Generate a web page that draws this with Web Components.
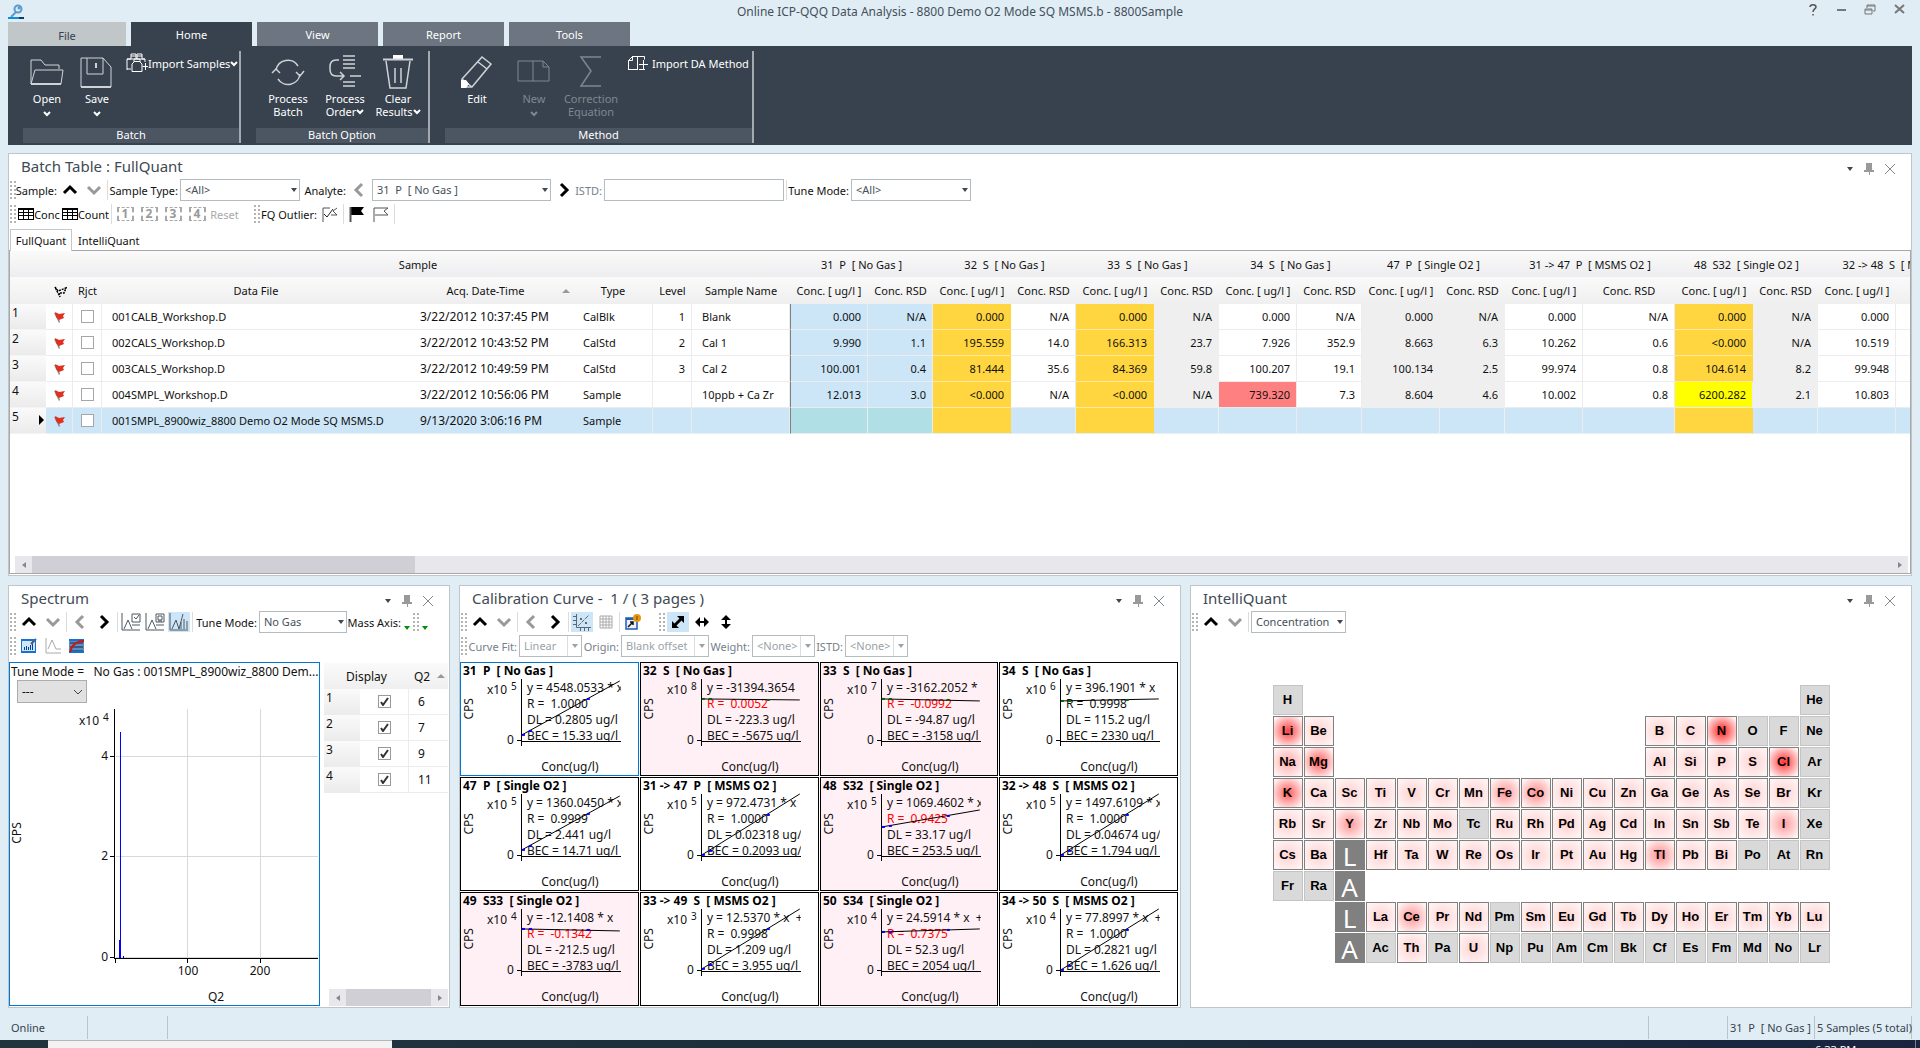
<!DOCTYPE html>
<html lang="en">
<head>
<meta charset="utf-8">
<title>Online ICP-QQQ Data Analysis</title>
<style>
  html, body { height: 100%; }
  body {
    margin: 0;
    background: #e0edf5;
    color: #111;
    font-family: "Noto Sans", "Open Sans", sans-serif;
    font-size: 11px;
    line-height: 13px;
  }
</style>
</head>
<body>
<ms-workbench></ms-workbench>

<script>
// ---------- icons ----------
const ICONS = {
  up: [16, 12, '<path d="M2 9 8 3l6 6" fill="none" stroke="#000" stroke-width="3"/>'],
  down: [16, 12, '<path d="M2 3 8 9l6-6" fill="none" stroke="#999" stroke-width="3"/>'],
  prev: [12, 16, '<path d="M9 2 3 8l6 6" fill="none" stroke="#999" stroke-width="3"/>'],
  next: [12, 16, '<path d="M3 2 9 8l-6 6" fill="none" stroke="#000" stroke-width="3"/>'],
  caret: [8, 6, '<path d="M1 1h6L4 5z" fill="#3c4750"/>'],
  chev: [8, 6, '<path d="M1 1l3 3 3-3" fill="none" stroke="currentColor" stroke-width="2"/>'],
  pin: [10, 12, '<path d="M2 0h6v7h2v2H6v3H5V9H0V7h2z" fill="#999"/>'],
  close: [12, 12, '<path d="M1 1l10 10M11 1L1 11" stroke="#808890" fill="none"/>'],
  key: [16, 16, '<circle cx="10" cy="5" r="3.5" fill="none" stroke="#5b9bd0" stroke-width="2"/><circle cx="11" cy="4" r="1.5" fill="#5b9bd0"/><path d="M8 8l-5 5" stroke="#5b9bd0" stroke-width="2"/><path d="M0 14h11" stroke="#0a8fe0" stroke-width="2"/><path d="M11 14h5" stroke="#0b3c66" stroke-width="2"/>'],
  help: [10, 12, '<path d="M2 3c0-3 6-3 6 0 0 2-3 2-3 5M5 10v1.500" fill="none" stroke="#555" stroke-width="1.500"/>'],
  min: [10, 12, '<path d="M1 6h9" stroke="#777" stroke-width="2"/>'],
  restore: [12, 12, '<path d="M3 4V1h8v6H9M1 5h7v5H1zM3 2h8M1 6h7" fill="none" stroke="#777" stroke-width="1"/>'],
  quit: [12, 12, '<path d="M1 1l9 8M10 1L1 9" stroke="#777" stroke-width="2"/>'],
  open: [34, 32, '<path d="M1 28V4h10l4 5h14v4M1 28 5 14h28l-2 14z" fill="none" stroke="#cfd3d7"/><path d="M1 28h30" stroke="#cfd3d7" stroke-width="2"/>'],
  save: [34, 32, '<path d="M1 2h22l8 9v20H1zM7 2v16h16V2" fill="none" stroke="#cfd3d7"/><path d="M1 31h30M16 7v5" stroke="#cfd3d7" stroke-width="2"/>'],
  samples: [22, 20, '<path d="M1 17V6h4V1h5v5M11 6V1h5v5h3v3M1 6h18M5 3h5M11 3h5M1 16h4" fill="none" stroke="#fff"/><path d="M6 18.500V11l2-2V6h6v3l2 2v7.500zM8 8.500h6M16.500 13.500H22M19.500 10v7" fill="none" stroke="#fff"/>'],
  process: [34, 32, '<path d="M5 14a12 12 0 0 1 22-4M29 18a12 12 0 0 1-22 5" fill="none" stroke="#cfd3d7" stroke-width="1.500"/><path d="M1 17l4-4 4 4M33 15l-4 5-4-4" fill="none" stroke="#cfd3d7" stroke-width="1.500"/>'],
  order: [34, 34, '<path d="M15 1h12M15 5h12M15 9h12M15 13h12M22 21h11M15 27h12M15 31h12" stroke="#cfd3d7" stroke-width="1.500"/><path d="M11 5H8q-6 0-6 7v2q0 7 6 7h8M12 17l4 4-4 4" fill="none" stroke="#cfd3d7" stroke-width="1.500"/>'],
  trash: [32, 34, '<path d="M11 0h10v4H11z" fill="#fff"/><path d="M1 4.500h30" stroke="#cfd3d7" stroke-width="2"/><path d="M4 6l4 27h16l4-27M13 13v15M19 13v15" fill="none" stroke="#cfd3d7" stroke-width="1.500"/>'],
  edit: [34, 34, '<path d="M2 24 22 2l9 7L12 32H2zM18 7l9 7M2 24l10 8" fill="none" stroke="#cfd3d7" stroke-width="1.500"/><path d="M1 25h5l3 4-3 4H1z" fill="#fff"/>'],
  fresh: [34, 32, '<path d="M1 5h25l6 6v14H1zM16 5v20M26 5v6h6" fill="none" stroke="#7e8791"/>'],
  sigma: [24, 32, '<path d="M22 1H2l10 14L2 30h20" fill="none" stroke="#7e8791" stroke-width="1.500"/>'],
  method: [26, 16, '<path d="M2.500 14.500V5.500l4-4h12v3M6.500 1v4.500h-4M2 14.500h10M11.500 1v13M13 14.500h6M17.500 5v9M13 9.500h9" fill="none" stroke="#fff"/>'],
  grid: [16, 12, '<path d="M0 0h16v12H0z" fill="#000"/><path d="M1 2h4v2H1zM6 2h4v2H6zM11 2h4v2h-4zM1 5h4v2H1zM6 5h4v2H6zM11 5h4v2h-4zM1 8h4v3H1zM6 8h4v3H6zM11 8h4v3h-4z" fill="#fff"/>'],
  flagCheck: [16, 16, '<path d="M1 16V2h7M15 2l-4 3 4 4H9" fill="none" stroke="#555"/><path d="M2 8l3 3 6-8" fill="none" stroke="#222"/>'],
  flagFull: [16, 16, '<path d="M1 1h14l-3 4 3 4H1z" fill="#000"/><path d="M1.500 1v15" stroke="#555" stroke-width="2"/>'],
  flagOpen: [16, 16, '<path d="M1 16V2h14l-4 3 4 4H2" fill="none" stroke="#555"/>'],
  flagHead: [14, 12, '<path d="M2 1l3 4 8-3-2 5H6L7 11z" fill="none" stroke="#000" stroke-width="1.500" stroke-dasharray="2 1"/>'],
  flagRed: [12, 12, '<path d="M1 2l5 10 1-1-3-9z" fill="#888"/><path d="M2 1l4 2 6-1-2 3 1 2-5 2-3-3z" fill="#e0301f"/>'],
  row: [6, 10, '<path d="M1 0l5 5-5 5z" fill="#000"/>'],
  asc: [8, 6, '<path d="M0 5h8L4 1z" fill="#999"/>'],
  left: [6, 8, '<path d="M5 1v6L1 4z" fill="#858595"/>'],
  right: [6, 8, '<path d="M1 1v6l4-3z" fill="#858595"/>'],
  tick: [9, 9, '<path d="M1 5l2 3 5-7" fill="none" stroke="#333" stroke-width="2"/>'],
  peakCheck: [20, 18, '<path d="M1 0v17h18M3 16l4-9 4 9M11 12h8M11 1h8v8h-8zM13 4l2 2 3-4" fill="none" stroke="#4c5660"/>'],
  peakLock: [20, 18, '<path d="M1 0v17h18M3 16l4-9 4 9M11 12h8M11 1h8v8h-8zM13 3h4v4h-4zM14 7v2M16 7v2" fill="none" stroke="#4c5660"/>'],
  peakBars: [20, 18, '<path d="M1 0v17h18M3 16l4-9 3 9 4-15M12 16V9M15 16V6M18 16V8" fill="none" stroke="#4c5660"/>'],
  barsBlue: [16, 16, '<rect x=".5" y="2" width="14" height="12" rx="1" fill="#cfe6f9" stroke="#1d6fc4"/><path d="M3.500 12V9M5.500 12V8M7.500 12V9M9.500 12V7M11.500 12V6" stroke="#003f9e"/><path d="M10 6l5-5" stroke="#555" stroke-width="2"/><path d="M0 14h15M0 2h15" stroke="#1672d2" stroke-width="2"/>'],
  peakGrey: [16, 16, '<path d="M1 0v15h15M3 11l4-9 4 9h5" fill="none" stroke="#aaa"/>'],
  curveRed: [16, 16, '<rect y="1" width="15" height="14" rx="1" fill="#5b8fc4"/><path d="M1 5h13M1 9h13M1 13h13" stroke="#1b2b40" stroke-width="1"/><path d="M0 2h15M0 14h15" stroke="#1672d2" stroke-width="2"/><path d="M1 14Q4 3 15 3" fill="none" stroke="#d01515" stroke-width="2"/>'],
  calib: [18, 18, '<path d="M3.500 1v13.500H18M0 3.500h3M0 7.500h3M0 11.500h3M7.500 15v3M11.500 15v3M15.500 15v3" fill="none" stroke="#5d6770"/><path d="M5 13 16 2" stroke="#5d6770" stroke-dasharray="4 1"/><path d="M7 5h2v2H7zM12 9h2v2h-2z" fill="#5d6770"/>'],
  table: [14, 14, '<path d="M1 1h12v12H1zM4 1v12M7 1v12M10 1v12M1 4h12M1 7h12M1 10h12" fill="none" stroke="#aaa"/>'],
  export: [16, 16, '<path d="M1 4h11v11H1z" fill="#eef" stroke="#1d5fae" stroke-width="1.500"/><path d="M1 4h11v2H1z" fill="#1d5fae"/><path d="M3 13l5-5M5 8h3v3" stroke="#111" stroke-width="1.500" fill="none"/><circle cx="12" cy="4" r="4" fill="#e8960f"/><path d="M12 2v4" stroke="#734600"/>'],
  diag: [14, 14, '<path d="M3 11 11 3" stroke="#000" stroke-width="3"/><path d="M6 1h7v7zM1 6v7h7z" fill="#000"/>'],
  horiz: [14, 14, '<path d="M3 7h8" stroke="#000" stroke-width="2"/><path d="M5 2v10L0 7zM9 2v10l5-5z" fill="#000"/>'],
  vert: [14, 14, '<path d="M7 3v8" stroke="#000" stroke-width="2"/><path d="M2 5h10L7 0zM2 9h10l-5 5z" fill="#000"/>'],
  green: [8, 6, '<path d="M1 1h6L4 5z" fill="#0a8a0a"/>']
};

function icon(name) {
  const [w, h, body] = ICONS[name];
  return `<svg width="${w}" height="${h}" viewBox="0 0 ${w} ${h}" aria-hidden="true">${body}</svg>`;
}

const RESET = `
  *, *::before, *::after { box-sizing: border-box; }
  svg { display: block; flex: none; }
  button { font: inherit; color: inherit; background: none; border: 0; padding: 0; margin: 0; }
`;

// ---------- title bar ----------
class TitleBar extends HTMLElement {
  constructor() {
    super();
    this.attachShadow({ mode: 'open' });
    this.shadowRoot.innerHTML = `
      <style>${RESET}
        :host { display: grid; grid-template-columns: 1fr auto 1fr; height: 22px; padding: 4px 8px 0; color: #44505a; }
        h1 { margin: 0; font-size: 12px; line-height: 16px; font-weight: normal; }
        .buttons { display: flex; justify-content: flex-end; align-items: flex-start; gap: 18px; padding-right: 6px; }
      </style>
      ${icon('key')}
      <h1><slot></slot></h1>
      <div class="buttons">
        <button aria-label="Help">${icon('help')}</button>
        <button aria-label="Minimize">${icon('min')}</button>
        <button aria-label="Restore">${icon('restore')}</button>
        <button aria-label="Close">${icon('quit')}</button>
      </div>
    `;
  }
}
customElements.define('title-bar', TitleBar);

// ---------- ribbon ----------
class RibbonTabs extends HTMLElement {
  constructor() {
    super();
    this.attachShadow({ mode: 'open' });
    const tabs = ['File', 'Home', 'View', 'Report', 'Tools'];
    this.shadowRoot.innerHTML = `
      <style>${RESET}
        :host { display: flex; gap: 5px; height: 24px; padding: 0 8px; }
        button { width: 121px; background: #6d7580; color: #fff; }
        .file { width: 118px; background: #c1c6c8; color: #38424e; padding-top: 3px; }
        .home { background: #38424e; }
      </style>
      ${tabs.map(t => `<button class="${t.toLowerCase()}">${t}</button>`).join('')}
    `;
  }
}
customElements.define('ribbon-tabs', RibbonTabs);

class RibbonGroup extends HTMLElement {
  constructor() {
    super();
    this.attachShadow({ mode: 'open' });
    this.shadowRoot.innerHTML = `
      <style>${RESET}
        :host { display: flex; flex-direction: column; border-right: 2px solid #a3a9af; }
        .items { display: flex; flex: 1; align-items: flex-start; }
        .name { height: 15px; background: #4c5562; text-align: center; line-height: 14px; }
      </style>
      <div class="items"><slot></slot></div>
      <div class="name">${this.getAttribute('name')}</div>
    `;
  }
}
customElements.define('ribbon-group', RibbonGroup);

class RibbonButton extends HTMLElement {
  constructor() {
    super();
    this.attachShadow({ mode: 'open' });
    const menu = this.getAttribute('menu');
    const label = this.getAttribute('label').split('|').join('<br>') + (menu === 'inline' ? icon('chev') : '');
    const pic = icon(this.getAttribute('icon'));
    this.shadowRoot.innerHTML = `
      <style>${RESET}
        :host { display: block; flex: none; color: #fff; }
        :host([disabled]) { color: #7e8791; }
        button { display: flex; flex-direction: column; align-items: center; width: 100%; padding-top: 3px; white-space: nowrap; }
        .pic { display: flex; align-items: center; height: 36px; margin-bottom: 2px; }
        .text svg { display: inline-block; vertical-align: 1px; }
        .below { margin-top: 6px; }
        .small { flex-direction: row; height: 24px; padding: 0 0 0 3px; }
      </style>
      ${this.hasAttribute('small')
        ? `<button class="small">${pic}<span class="text">${label}</span></button>`
        : `<button><span class="pic">${pic}</span><span class="text">${label}</span>
           ${menu === 'below' ? `<span class="below">${icon('chev')}</span>` : ''}</button>`}
    `;
  }
}
customElements.define('ribbon-button', RibbonButton);

class AppRibbon extends HTMLElement {
  constructor() {
    super();
    this.attachShadow({ mode: 'open' });
    this.shadowRoot.innerHTML = `
      <style>${RESET}
        :host { display: flex; gap: 15px; height: 99px; margin: 0 8px; padding: 5px 15px 2px; background: #38424e; color: #fff; }
        .w48 { width: 48px; } .w50 { width: 50px; } .w52 { width: 52px; } .w56 { width: 56px; } .w64 { width: 64px; }
        .batch { width: 218px; } .option { width: 174px; } .method { width: 309px; }
      </style>
      <ribbon-group class="batch" name="Batch">
        <ribbon-button class="w48" icon="open" label="Open" menu="below"></ribbon-button>
        <ribbon-button class="w52" icon="save" label="Save" menu="below"></ribbon-button>
        <ribbon-button small icon="samples" label="Import Samples" menu="inline"></ribbon-button>
      </ribbon-group>
      <ribbon-group class="option" name="Batch Option">
        <ribbon-button class="w64" icon="process" label="Process|Batch"></ribbon-button>
        <ribbon-button class="w50" icon="order" label="Process|Order" menu="inline"></ribbon-button>
        <ribbon-button class="w56" icon="trash" label="Clear|Results" menu="inline"></ribbon-button>
      </ribbon-group>
      <ribbon-group class="method" name="Method">
        <ribbon-button class="w64" icon="edit" label="Edit"></ribbon-button>
        <ribbon-button class="w50" disabled icon="fresh" label="New" menu="below"></ribbon-button>
        <ribbon-button class="w64" disabled icon="sigma" label="Correction|Equation"></ribbon-button>
        <ribbon-button small icon="method" label="Import DA Method"></ribbon-button>
      </ribbon-group>
    `;
  }
}
customElements.define('app-ribbon', AppRibbon);

// ---------- panels and toolbars ----------
class DockPanel extends HTMLElement {
  constructor() {
    super();
    this.attachShadow({ mode: 'open' });
    this.shadowRoot.innerHTML = `
      <style>${RESET}
        :host { display: flex; flex-direction: column; min-width: 0; min-height: 0; background: #fff; border: 1px solid #bfc6ca; overflow: hidden; }
        header { display: flex; justify-content: space-between; height: 24px; padding: 0 15px 0 12px; }
        h2 { margin: 0; font-size: 15px; line-height: 24px; font-weight: normal; color: #404a54; white-space: pre; }
        .tools { display: flex; align-items: center; gap: 10px; padding-top: 6px; }
        .body { display: flex; flex-direction: column; flex: 1; min-height: 0; }
      </style>
      <header>
        <h2>${this.getAttribute('name')}</h2>
        <div class="tools">
          <button aria-label="Menu">${icon('caret')}</button>
          <button aria-label="Pin">${icon('pin')}</button>
          <button aria-label="Close">${icon('close')}</button>
        </div>
      </header>
      <slot name="bar"></slot>
      <div class="body"><slot></slot></div>
    `;
  }
}
customElements.define('dock-panel', DockPanel);

class ToolBar extends HTMLElement {
  constructor() {
    super();
    this.attachShadow({ mode: 'open' });
    this.shadowRoot.innerHTML = `
      <style>
        :host { display: flex; align-items: center; gap: 2px; height: 24px; padding-left: 1px; white-space: nowrap; flex: none; }
      </style>
      <slot></slot>
    `;
  }
}
customElements.define('tool-bar', ToolBar);

class ToolGrip extends HTMLElement {
  constructor() {
    super();
    this.attachShadow({ mode: 'open' });
    this.shadowRoot.innerHTML = `
      <style>
        :host { display: block; flex: none; width: 6px; height: 18px;
          background: conic-gradient(#b4b4b4 25%, transparent 0) -2px 0 / 4px 4px; }
        :host([spaced]) { margin-left: 13px; }
      </style>
    `;
  }
}
customElements.define('tool-grip', ToolGrip);

class ToolSep extends HTMLElement {
  constructor() {
    super();
    this.attachShadow({ mode: 'open' });
    this.shadowRoot.innerHTML = `<style>:host { display: block; width: 1px; height: 20px; background: #dcdcdc; }</style>`;
  }
}
customElements.define('tool-sep', ToolSep);

class ToolButton extends HTMLElement {
  constructor() {
    super();
    this.attachShadow({ mode: 'open' });
    const name = this.getAttribute('icon');
    this.shadowRoot.innerHTML = `
      <style>${RESET}
        :host { display: block; flex: none; min-width: 22px; }
        :host([on]) { background: #cde6f7; }
        :host([narrow]) { min-width: 8px; padding-top: 12px; }
        :host([disabled]) { color: #a9a9a9; }
        button { display: flex; align-items: center; justify-content: center; width: 100%; height: 20px; }
        :host([narrow]) button { height: 6px; }
        .num { width: 17px; height: 14px; border: dashed #a8a8a8; border-width: 1px 2px; font-size: 12px; line-height: 12px; font-weight: bold; color: #999; text-align: center; }
      </style>
      <button aria-label="${this.getAttribute('hint') || name || ''}">
        ${name ? icon(name) : ''}
        ${this.hasAttribute('num') ? `<span class="num">${this.getAttribute('num')}</span>` : ''}
        <slot></slot>
      </button>
    `;
  }
}
customElements.define('tool-button', ToolButton);

class ComboBox extends HTMLElement {
  constructor() {
    super();
    this.attachShadow({ mode: 'open' });
    const label = this.getAttribute('label') || '';
    const value = this.getAttribute('value') || '';
    const off = this.hasAttribute('disabled');
    const field = this.hasAttribute('text')
      ? `<input id="field" type="text" aria-label="${label}">`
      : `<select id="field" ${off ? 'disabled' : ''} aria-label="${label || value}"><option>${value}</option></select><span class="arrow">${icon('caret')}</span>`;
    this.shadowRoot.innerHTML = `
      <style>${RESET}
        :host { display: flex; align-items: center; gap: 2px; flex: none; }
        :host([muted]) label, :host([disabled]) label { color: #77808a; }
        label { width: var(--label); white-space: nowrap; display: flex; justify-content: flex-end; }
        .box { position: relative; width: var(--field); height: 22px; }
        select, input { appearance: none; width: 100%; height: 22px; margin: 0; padding: 0 0 2px 4px; border: 1px solid #b4bcc0; border-radius: 0; background: #fff; font: inherit; color: #46505a; opacity: 1; }
        .arrow { position: absolute; right: 2px; top: 8px; pointer-events: none; }
        :host([disabled]) select { color: #9aa2a8; }
        :host([disabled]) .arrow { right: 0; top: 0; height: 22px; padding: 8px 3px; border-left: 1px solid #b4bcc0; opacity: .5; }
      </style>
      ${label ? `<label for="field">${label}</label>` : ''}
      <div class="box">${field}</div>
    `;
  }
}
customElements.define('combo-box', ComboBox);

class ScrollTrack extends HTMLElement {
  constructor() {
    super();
    this.attachShadow({ mode: 'open' });
    this.shadowRoot.innerHTML = `
      <style>${RESET}
        :host { display: flex; flex: none; height: 17px; background: #e8e8ec; }
        button { display: flex; align-items: center; justify-content: center; width: 17px; }
        .track { flex: 1; }
        .thumb { width: var(--thumb); height: 100%; background: #cfcfd5; }
      </style>
      <button aria-label="Scroll left">${icon('left')}</button>
      <div class="track"><div class="thumb"></div></div>
      <button aria-label="Scroll right">${icon('right')}</button>
    `;
  }
}
customElements.define('scroll-track', ScrollTrack);

// ---------- batch table ----------
const ANALYTES = [
  { name: '31  P  [ No Gas ]', rsd: 65, cls: 'blue', rsdCls: 'blue' },
  { name: '32  S  [ No Gas ]', rsd: 65, cls: 'gold', rsdCls: '' },
  { name: '33  S  [ No Gas ]', rsd: 65, cls: 'gold', rsdCls: 'grey' },
  { name: '34  S  [ No Gas ]', rsd: 65, cls: '', rsdCls: '' },
  { name: '47  P  [ Single O2 ]', rsd: 65, cls: 'grey', rsdCls: 'grey' },
  { name: '31 -> 47  P  [ MSMS O2 ]', rsd: 92, cls: '', rsdCls: '' },
  { name: '48  S32  [ Single O2 ]', rsd: 65, cls: 'gold', rsdCls: 'grey' },
  { name: '32 -> 48  S  [ MSMS O2 ]', rsd: 92, cls: '', rsdCls: '' }
];

const SAMPLES = [
  ['001CALB_Workshop.D', '3/22/2012 10:37:45 PM', 'CalBlk', '1', 'Blank',
    ['0.000', 'N/A', '0.000', 'N/A', '0.000', 'N/A', '0.000', 'N/A', '0.000', 'N/A', '0.000', 'N/A', '0.000', 'N/A', '0.000', '']],
  ['002CALS_Workshop.D', '3/22/2012 10:43:52 PM', 'CalStd', '2', 'Cal 1',
    ['9.990', '1.1', '195.559', '14.0', '166.313', '23.7', '7.926', '352.9', '8.663', '6.3', '10.262', '0.6', '&lt;0.000', 'N/A', '10.519', '']],
  ['003CALS_Workshop.D', '3/22/2012 10:49:59 PM', 'CalStd', '3', 'Cal 2',
    ['100.001', '0.4', '81.444', '35.6', '84.369', '59.8', '100.207', '19.1', '100.134', '2.5', '99.974', '0.8', '104.614', '8.2', '99.948', '']],
  ['004SMPL_Workshop.D', '3/22/2012 10:56:06 PM', 'Sample', '', '10ppb + Ca Zr',
    ['12.013', '3.0', '&lt;0.000', 'N/A', '&lt;0.000', 'N/A', '739.320', '7.3', '8.604', '4.6', '10.002', '0.8', '6200.282', '2.1', '10.803', '']],
  ['001SMPL_8900wiz_8800 Demo O2 Mode SQ MSMS.D', '9/13/2020 3:06:16 PM', 'Sample', '', '', Array(16).fill('')]
];

class BatchGrid extends HTMLElement {
  constructor() {
    super();
    this.attachShadow({ mode: 'open' });
    const cols = [36, 27, 29, 308, 163, 80, 39, 98];
    ANALYTES.forEach(a => cols.push(78, a.rsd));
    const total = cols.reduce((a, b) => a + b, 0);

    const rows = SAMPLES.map((s, r) => {
      const values = s[5].map((v, i) => {
        const a = ANALYTES[i >> 1];
        let cls = i % 2 ? a.rsdCls : a.cls;
        if (v === '739.320') cls = 'red';
        if (v === '6200.282') cls = 'yellow';
        return `<td class="num ${cls} ${i === 0 ? 'edge' : ''}">${v}</td>`;
      }).join('');
      const last = r === SAMPLES.length - 1;
      return `
        <tr class="${last ? 'current' : ''}">
          <th class="no"><span>${r + 1}${last ? icon('row') : ''}</span></th>
          <td class="mid">${icon('flagRed')}</td>
          <td class="mid"><input type="checkbox" aria-label="Reject ${s[0]}"></td>
          <td class="plain">${s[0]}</td><td class="plain date">${s[1]}</td><td>${s[2]}</td>
          <td class="num">${s[3]}</td><td>${s[4]}</td>${values}
        </tr>`;
    }).join('');

    this.shadowRoot.innerHTML = `
      <style>${RESET}
        :host { display: flex; flex-direction: column; flex: 1; min-height: 0; }
        .tabs { display: flex; height: 24px; padding: 3px 0 0 1px; position: relative; z-index: 1; }
        .tabs button { height: 22px; padding: 0 6px; }
        .tabs .on { width: 62px; border: 1px solid #c4c8cb; border-bottom: 0; background: #fff; padding: 0; }
        .frame { display: flex; flex-direction: column; flex: 1; min-height: 0; border: 1px solid #a8a8a8; margin-bottom: 1px; }
        .view { flex: 1; overflow: hidden; }
        table { width: ${total}px; table-layout: fixed; border-collapse: separate; border-spacing: 0; }
        th { font-weight: normal; height: 26px; padding: 0; white-space: pre; }
        thead tr:first-child th { background: linear-gradient(#fafafa, #ededf0); }
        thead tr:last-child th { height: 27px; background: linear-gradient(#fafafa, #efefef); }
        thead svg { display: inline-block; vertical-align: middle; }
        td { height: 26px; padding: 0 10px; border: solid #ececee; border-width: 0 1px 1px 0; white-space: nowrap; overflow: hidden; }
        .plain { border-right: 0; }
        .date { font-size: 12px; }
        .mid { padding: 0; }
        .mid svg { margin: 0 auto; }
        .num { text-align: right; padding: 0 6px; }
        .no { background: linear-gradient(#fafafa, #ebebeb); border-bottom: 1px solid #f4f4f4; text-align: left; vertical-align: top; font-size: 12px; }
        .no span { display: flex; justify-content: space-between; padding: 2px 2px 0; }
        .no svg { margin-top: 5px; }
        .sort { display: flex; justify-content: center; align-items: center; position: relative; padding-right: 12px; }
        .sort svg { position: absolute; right: 3px; top: 4px; }
        .blue { background: #cce6f7; }
        .gold { background: #ffd63f; border-color: #ffe9a0; border-right-color: #ffd63f; }
        .grey { background: #efefef; border-color: #efefef; }
        .red { background: #ff8080; }
        .yellow { background: #ff0; }
        .edge { border-left: 1px solid #808080; }
        .current td { background: #cce6f7; border-bottom-color: #e6f0f5; }
        .current td.blue { background: #b0e0e6; }
        .current td.gold { background: #ffd63f; }
        input { appearance: none; display: block; width: 13px; height: 13px; margin: 0 auto; border: 1px solid #a6a6a6; background: #fff; }
        scroll-track { --thumb: 383px; margin: 0 2px 0 5px; }
      </style>
      <div class="tabs"><button class="on">FullQuant</button><button>IntelliQuant</button></div>
      <div class="frame">
        <div class="view">
          <table>
            <colgroup>${cols.map(w => `<col style="width:${w}px">`).join('')}</colgroup>
            <thead>
              <tr><th></th><th colspan="7">Sample</th>${ANALYTES.map(a => `<th colspan="2">${a.name}</th>`).join('')}</tr>
              <tr>
                <th></th><th>${icon('flagHead')}</th><th>Rjct</th><th>Data File</th>
                <th><span class="sort">Acq. Date-Time${icon('asc')}</span></th>
                <th>Type</th><th>Level</th><th>Sample Name</th>
                ${ANALYTES.map((a, i) => `<th>Conc. [ ug/l ]</th><th>${i < 7 ? 'Conc. RSD' : ''}</th>`).join('')}
              </tr>
            </thead>
            <tbody>${rows}</tbody>
          </table>
        </div>
        <scroll-track></scroll-track>
      </div>
    `;
  }
}
customElements.define('batch-grid', BatchGrid);

// ---------- spectrum ----------
class SpectrumPlot extends HTMLElement {
  constructor() {
    super();
    this.attachShadow({ mode: 'open' });
    this.shadowRoot.innerHTML = `
      <style>${RESET}
        :host { display: flex; flex-direction: column; flex: 1; min-width: 0; border: 1px solid #0078d7; font-size: 12px; }
        .head { height: 17px; padding-left: 1px; line-height: 18px; white-space: pre; }
        .pick { position: relative; width: 70px; height: 23px; margin-left: 7px; }
        select { appearance: none; width: 100%; height: 100%; padding: 0 4px; border: 1px solid #adadad; border-radius: 0; background: #e1e1e1; font: inherit; color: #111; }
        .pick svg { position: absolute; right: 4px; top: 9px; }
        .plot { width: 100%; flex: 1; min-height: 0; }
        text { font-size: 12px; fill: #111; }
        .sup { font-size: 10px; }
        path { shape-rendering: crispEdges; }
      </style>
      <div class="head">Tune Mode =   No Gas : 001SMPL_8900wiz_8800 Dem...</div>
      <div class="pick"><select aria-label="Series"><option>---</option></select><svg width="10" height="6"><path d="M1 1l4 4 4-4" fill="none" stroke="#444"/></svg></div>
      <svg class="plot" viewBox="0 0 309 301" preserveAspectRatio="xMinYMin meet">
        <path d="M105.500 53.500H308M105.500 153.500H308M105.500 254.500H308M177.500 6V255M250.500 6V255" stroke="#d8d8d8"/>
        <path d="M104.500 6V255.500H308M100 53.500h5M100 153.500h5M100 254.500h5M105.500 255v5M177.500 255v5M250.500 255v5" fill="none" stroke="#000"/>
        <path d="M110.500 29V255M109.500 237V255M113.500 253v2" stroke="#00f"/>
        <text x="69" y="22">x10</text><text class="sup" x="93" y="18">4</text>
        <text x="98" y="57" text-anchor="end">4</text>
        <text x="98" y="157" text-anchor="end">2</text>
        <text x="98" y="258" text-anchor="end">0</text>
        <text x="178" y="272" text-anchor="middle">100</text>
        <text x="250" y="272" text-anchor="middle">200</text>
        <text x="206" y="298" text-anchor="middle">Q2</text>
        <text transform="translate(11 130) rotate(-90)" text-anchor="middle">CPS</text>
      </svg>
    `;
  }
}
customElements.define('spectrum-plot', SpectrumPlot);

class MassTable extends HTMLElement {
  constructor() {
    super();
    this.attachShadow({ mode: 'open' });
    const masses = [6, 7, 9, 11];
    this.shadowRoot.innerHTML = `
      <style>${RESET}
        :host { display: flex; flex-direction: column; justify-content: space-between; width: 125px; padding: 1px 1px 0 0; font-size: 12px; }
        table { width: 100%; table-layout: fixed; border-spacing: 0; }
        th, td { height: 26px; padding: 0; font-weight: normal; }
        thead th { background: linear-gradient(#fafafa, #efefef); }
        thead span { display: flex; align-items: center; justify-content: space-between; padding: 0 3px 0 5px; }
        tbody th { text-align: left; vertical-align: top; padding: 2px; background: linear-gradient(#fafafa, #ebebeb); }
        td { border: solid #ececee; border-width: 0 1px 1px 0; padding-left: 9px; }
        td:last-child { border-right: 0; }
        td.tick { padding: 0; }
        .check { display: grid; place-items: center; }
        .check > * { grid-area: 1 / 1; }
        .check svg { pointer-events: none; }
        input { appearance: none; width: 13px; height: 13px; margin: 0; border: 1px solid #999; background: #fff; }
        scroll-track { --thumb: 100%; margin-left: 5px; }
      </style>
      <table>
        <colgroup><col style="width:36px"><col style="width:49px"><col></colgroup>
        <thead><tr><th colspan="2">Display</th><th><span>Q2${icon('asc')}</span></th></tr></thead>
        <tbody>
          ${masses.map((m, i) => `<tr><th>${i + 1}</th><td class="tick"><label class="check"><input type="checkbox" aria-label="Display ${m}" checked>${icon('tick')}</label></td><td>${m}</td></tr>`).join('')}
        </tbody>
      </table>
      <scroll-track></scroll-track>
    `;
  }
}
customElements.define('mass-table', MassTable);

// ---------- calibration curves ----------
// line: y of the fit at the left and at the right edge of the plot
const CURVES = [
  { t: '31  P  [ No Gas ]', e: 5, y: '4548.0533 * x', r: ' 1.0000', dl: '0.2805', bec: '15.33', line: [73, 19], on: true },
  { t: '32  S  [ No Gas ]', e: 8, y: '-31394.3654', r: ' 0.0052', dl: '-223.3', bec: '-5675', line: [37, 38], bad: true, dot: '#060' },
  { t: '33  S  [ No Gas ]', e: 7, y: '-3162.2052 *', r: ' -0.0992', dl: '-94.87', bec: '-3158', line: [37, 39], bad: true, dot: '#060' },
  { t: '34  S  [ No Gas ]', e: 6, y: '396.1901 * x', r: ' 0.9998', dl: '115.2', bec: '2330', line: [39, 37], dot: '#060' },
  { t: '47  P  [ Single O2 ]', e: 5, y: '1360.0450 * x', r: ' 0.9999', dl: '2.441', bec: '14.71', line: [73, 19] },
  { t: '31 -> 47  P  [ MSMS O2 ]', e: 5, y: '972.4731 * x', r: ' 1.0000', dl: '0.02318', bec: '0.2093', line: [78, 17] },
  { t: '48  S32  [ Single O2 ]', e: 5, y: '1069.4602 * x', r: ' 0.9425', dl: '33.17', bec: '253.5', line: [50, 33], bad: true },
  { t: '32 -> 48  S  [ MSMS O2 ]', e: 5, y: '1497.6109 * x', r: ' 1.0000', dl: '0.04674', bec: '1.794', line: [78, 17] },
  { t: '49  S33  [ Single O2 ]', e: 4, y: '-12.1408 * x', r: ' -0.1342', dl: '-212.5', bec: '-3783', line: [37, 39], bad: true },
  { t: '33 -> 49  S  [ MSMS O2 ]', e: 3, y: '12.5370 * x  +', r: ' 0.9998', dl: '1.209', bec: '3.955', line: [77, 17] },
  { t: '50  S34  [ Single O2 ]', e: 4, y: '24.5914 * x  +', r: ' 0.7375', dl: '52.3', bec: '2054', line: [40, 37], bad: true },
  { t: '34 -> 50  S  [ MSMS O2 ]', e: 4, y: '77.8997 * x  +', r: ' 1.0000', dl: '0.2821', bec: '1.626', line: [78, 17] }
];

class CurveCard extends HTMLElement {
  constructor() {
    super();
    this.attachShadow({ mode: 'open' });
  }

  set curve(c) {
    const [a, b] = c.line;
    const at = x => Math.round(a + (b - a) * (x - 62) / 98);
    const dot = [62, 69, 127].map(x => `<rect x="${x}" y="${at(x) - 1}" width="3" height="2" fill="${c.dot || '#00f'}"/>`).join('');
    this.shadowRoot.innerHTML = `
      <style>
        :host { display: block; min-width: 0; min-height: 0; border: 1px solid ${c.on ? '#0078d7' : '#000'}; background: ${c.bad ? '#fff0f5' : '#fff'}; }
        .card { display: block; width: 100%; height: 100%; }
        text { font-size: 12px; fill: #111; white-space: pre; }
        .title { font-weight: bold; fill: #000; }
        .sup { font-size: 10px; }
        .bad { fill: #f00; }
        .axis { shape-rendering: crispEdges; }
      </style>
      <svg class="card" viewBox="1 1 177 112" preserveAspectRatio="xMinYMin meet">
        <text class="title" x="3" y="13">${c.t.replace('>', '&gt;')}</text>
        <text x="27" y="32">x10</text><text class="sup" x="51" y="28">${c.e}</text>
        <text x="54" y="82" text-anchor="end">0</text>
        <text transform="translate(13 47) rotate(-90)" text-anchor="middle">CPS</text>
        <svg x="64" y="16" width="97" height="64" viewBox="64 16 97 64">
          <text x="67" y="30">y = ${c.y}</text>
          <text x="67" y="46" class="${c.bad ? 'bad' : ''}">R = ${c.r}</text>
          <text x="67" y="62">DL = ${c.dl} ug/l</text>
          <text x="67" y="78">BEC = ${c.bec} ug/l</text>
        </svg>
        <path d="M62 ${a}L160 ${b}" stroke="#000"/>
        <path class="axis" d="M61.500 17V79.500H161M57 78.500h4M61.500 79v5" fill="none" stroke="#000"/>
        ${dot}
        <text x="110" y="109" text-anchor="middle">Conc(ug/l)</text>
      </svg>
    `;
  }
}
customElements.define('curve-card', CurveCard);

class CurveGrid extends HTMLElement {
  constructor() {
    super();
    this.attachShadow({ mode: 'open' });
    this.shadowRoot.innerHTML = `
      <style>
        :host { display: grid; grid-template: repeat(3, 1fr) / repeat(4, 1fr); gap: 1px; flex: 1; min-height: 0; margin-top: 4px; padding: 0 2px 1px 0; background: #fff; }
      </style>
    `;
    CURVES.forEach(c => {
      const card = document.createElement('curve-card');
      card.curve = c;
      this.shadowRoot.append(card);
    });
  }
}
customElements.define('curve-grid', CurveGrid);

// ---------- periodic table ----------
const PERIODS = [
  'H . . . . . . . . . . . . . . . . He',
  'Li Be . . . . . . . . . . B C N O F Ne',
  'Na Mg . . . . . . . . . . Al Si P S Cl Ar',
  'K Ca Sc Ti V Cr Mn Fe Co Ni Cu Zn Ga Ge As Se Br Kr',
  'Rb Sr Y Zr Nb Mo Tc Ru Rh Pd Ag Cd In Sn Sb Te I Xe',
  'Cs Ba *L Hf Ta W Re Os Ir Pt Au Hg Tl Pb Bi Po At Rn',
  'Fr Ra *A . . . . . . . . . . . . . . .',
  '. . *L La Ce Pr Nd Pm Sm Eu Gd Tb Dy Ho Er Tm Yb Lu',
  '. . *A Ac Th Pa U Np Pu Am Cm Bk Cf Es Fm Md No Lr'
];
const UNUSED = new Set('H He O F Ne Ar Kr Tc Xe Po At Rn Fr Ra Pm Ac Pa Np Pu Am Cm Bk Cf Es Fm Md No Lr'.split(' '));
const HEAT = {
  N: '#ff2020', Cl: '#ff3030', Li: '#ff4040', Mg: '#ff5c5c', K: '#ff5c5c', Co: '#ff8c8c',
  Fe: '#ff9696', Tl: '#ff8c8c', Y: '#ff9696', Ce: '#ff9696', I: '#ff9c9c', Na: '#ffaaaa'
};

class ElementMap extends HTMLElement {
  constructor() {
    super();
    this.attachShadow({ mode: 'open' });
    const cells = PERIODS.join(' ').split(' ').map(s => {
      if (s === '.') return '<span></span>';
      if (s[0] === '*') return `<span class="series">${s[1]}</span>`;
      if (UNUSED.has(s)) return `<button class="unused">${s}</button>`;
      return `<button${HEAT[s] ? ` style="--heat:${HEAT[s]}"` : ''}>${s}</button>`;
    }).join('');
    this.shadowRoot.innerHTML = `
      <style>${RESET}
        :host { display: grid; grid-template: repeat(9, 30px) / repeat(18, 30px); gap: 1px; place-content: center; flex: 1; padding-top: 6px; }
        button { border: 1px solid #808080; background: radial-gradient(circle, var(--heat, #ffd2d2), #fff4f4 90%); font: bold 13px "Liberation Sans", Arial, sans-serif; color: #000; }
        .unused { border-color: #c4c4c4; background: #d9d9d9; }
        .series { background: #808080; color: #fff; font: 26px/33px "Noto Sans", sans-serif; text-align: center; }
      </style>
      ${cells}
    `;
  }
}
customElements.define('element-map', ElementMap);

// ---------- status bar and task bar ----------
class StatusBar extends HTMLElement {
  constructor() {
    super();
    this.attachShadow({ mode: 'open' });
    this.shadowRoot.innerHTML = `
      <style>${RESET}
        :host { display: flex; height: 32px; padding: 8px 8px 1px; color: #38424e; white-space: pre; line-height: 23px; }
        span { border-left: 1px solid #b9c3c9; padding-left: 2px; }
        .first { border-left: 0; padding-left: 3px; }
        .w79 { width: 79px; } .w80 { width: 80px; } .w87 { width: 87px; } .w98 { width: 98px; border-right: 1px solid #b9c3c9; }
        .grow { flex: 1; }
      </style>
      <span class="first w79">Online</span><span class="w80"></span><span class="grow"></span>
      <span class="w79"></span><span class="w87">31  P  [ No Gas ]</span><span class="w98">5 Samples (5 total)</span>
    `;
  }
}
customElements.define('status-bar', StatusBar);

class TaskBar extends HTMLElement {
  constructor() {
    super();
    this.attachShadow({ mode: 'open' });
    this.shadowRoot.innerHTML = `
      <style>
        :host { display: flex; justify-content: space-between; height: 8px; overflow: hidden; background: linear-gradient(to right, #1e353e, #1c2f3c 50%, #1a2440); color: #fff; }
        .search { width: 344px; margin-left: 48px; background: #f2f2f2; border-top: 1px solid #b5b5b5; }
        .clock { width: 101px; padding-top: 3px; border-right: 1px solid #77808c; margin-right: 4px; box-sizing: border-box; }
      </style>
      <div class="search"></div>
      <div class="clock">6:33 PM</div>
    `;
  }
}
customElements.define('task-bar', TaskBar);

// ---------- workbench ----------
class MsWorkbench extends HTMLElement {
  constructor() {
    super();
    this.attachShadow({ mode: 'open' });
    this.shadowRoot.innerHTML = `
      <style>${RESET}
        :host { display: flex; flex-direction: column; height: 100vh; min-height: 800px; overflow: hidden; }
        main { display: grid; grid-template-rows: 1fr 1fr; gap: 9px; flex: 1; min-height: 0; padding: 8px 8px 0; }
        .lower { display: grid; grid-template-columns: 442fr 722fr 722fr; gap: 9px; min-height: 0; }
        .text { display: flex; justify-content: flex-end; }
        .w39 { width: 39px; } .w44 { width: 44px; } .w52 { width: 52px; } .w55 { width: 55px; }
        .conc { width: 42px; } .count { width: 47px; } .reset { width: 29px; }
        .spectrum { display: flex; gap: 4px; flex: 1; min-height: 0; margin-top: 4px; padding-bottom: 1px; }
      </style>
      <title-bar>Online ICP-QQQ Data Analysis - 8800 Demo O2 Mode SQ MSMS.b - 8800Sample</title-bar>
      <ribbon-tabs></ribbon-tabs>
      <app-ribbon></app-ribbon>
      <main>
        <dock-panel name="Batch Table : FullQuant">
          <tool-bar slot="bar">
            <tool-grip></tool-grip><span class="text w39">Sample:</span>
            <tool-button icon="up"></tool-button><tool-button icon="down"></tool-button><tool-sep></tool-sep>
            <combo-box label="Sample Type:" value="&amp;lt;All&amp;gt;" style="--label:68px;--field:120px"></combo-box>
            <span class="text w44">Analyte:</span>
            <tool-button icon="prev"></tool-button>
            <combo-box value="31&#160; P&#160; [ No Gas ]" style="--field:179px"></combo-box>
            <tool-button icon="next"></tool-button>
            <combo-box text muted label="ISTD:" style="--label:25px;--field:180px"></combo-box><tool-sep></tool-sep>
            <combo-box label="Tune Mode:" value="&amp;lt;All&amp;gt;" style="--label:60px;--field:120px"></combo-box>
          </tool-bar>
          <tool-bar slot="bar">
            <tool-grip></tool-grip>
            <tool-button class="conc" icon="grid">Conc</tool-button>
            <tool-button class="count" icon="grid">Count</tool-button><tool-sep></tool-sep>
            <tool-button num="1"></tool-button><tool-button num="2"></tool-button>
            <tool-button num="3"></tool-button><tool-button num="4"></tool-button>
            <tool-button class="reset" disabled>Reset</tool-button>
            <tool-grip spaced></tool-grip><span class="text w55">FQ Outlier:</span>
            <tool-button icon="flagCheck"></tool-button><tool-sep></tool-sep>
            <tool-button icon="flagFull"></tool-button><tool-button icon="flagOpen"></tool-button><tool-sep></tool-sep>
          </tool-bar>
          <batch-grid></batch-grid>
        </dock-panel>
        <div class="lower">
          <dock-panel name="Spectrum">
            <tool-bar slot="bar">
              <tool-grip></tool-grip><tool-button icon="up"></tool-button><tool-button icon="down"></tool-button><tool-sep></tool-sep>
              <tool-button icon="prev"></tool-button><tool-button icon="next"></tool-button><tool-sep></tool-sep>
              <tool-button icon="peakCheck"></tool-button><tool-button icon="peakLock"></tool-button><tool-button on icon="peakBars"></tool-button><tool-sep></tool-sep>
              <combo-box label="Tune Mode:" value="No Gas" style="--label:62px;--field:88px"></combo-box>
              <span class="text w52">Mass Axis:</span>
              <tool-button narrow icon="green"></tool-button><tool-grip></tool-grip><tool-button narrow icon="green"></tool-button>
            </tool-bar>
            <tool-bar slot="bar">
              <tool-grip></tool-grip><tool-button icon="barsBlue"></tool-button><tool-button icon="peakGrey"></tool-button><tool-button icon="curveRed"></tool-button>
            </tool-bar>
            <div class="spectrum"><spectrum-plot></spectrum-plot><mass-table></mass-table></div>
          </dock-panel>
          <dock-panel name="Calibration Curve -  1 / ( 3 pages )">
            <tool-bar slot="bar">
              <tool-grip></tool-grip><tool-button icon="up"></tool-button><tool-button icon="down"></tool-button><tool-sep></tool-sep>
              <tool-button icon="prev"></tool-button><tool-button icon="next"></tool-button><tool-sep></tool-sep>
              <tool-button on icon="calib"></tool-button><tool-button icon="table"></tool-button><tool-sep></tool-sep>
              <tool-button icon="export"></tool-button>
              <tool-grip spaced></tool-grip><tool-button on icon="diag"></tool-button><tool-button icon="horiz"></tool-button><tool-button icon="vert"></tool-button>
            </tool-bar>
            <tool-bar slot="bar">
              <tool-grip></tool-grip>
              <combo-box disabled label="Curve Fit:" value="Linear" style="--label:48px;--field:63px"></combo-box>
              <combo-box disabled label="Origin:" value="Blank offset" style="--label:35px;--field:88px"></combo-box>
              <combo-box disabled label="Weight:" value="&amp;lt;None&amp;gt;" style="--label:39px;--field:63px"></combo-box>
              <combo-box disabled label="ISTD:" value="&amp;lt;None&amp;gt;" style="--label:26px;--field:63px"></combo-box>
            </tool-bar>
            <curve-grid></curve-grid>
          </dock-panel>
          <dock-panel name="IntelliQuant">
            <tool-bar slot="bar">
              <tool-grip></tool-grip><tool-button icon="up"></tool-button><tool-button icon="down"></tool-button><tool-sep></tool-sep>
              <combo-box value="Concentration" style="--field:95px"></combo-box>
            </tool-bar>
            <element-map></element-map>
          </dock-panel>
        </div>
      </main>
      <status-bar></status-bar>
      <task-bar></task-bar>
    `;
  }
}
customElements.define('ms-workbench', MsWorkbench);
</script>
</body>
</html>
